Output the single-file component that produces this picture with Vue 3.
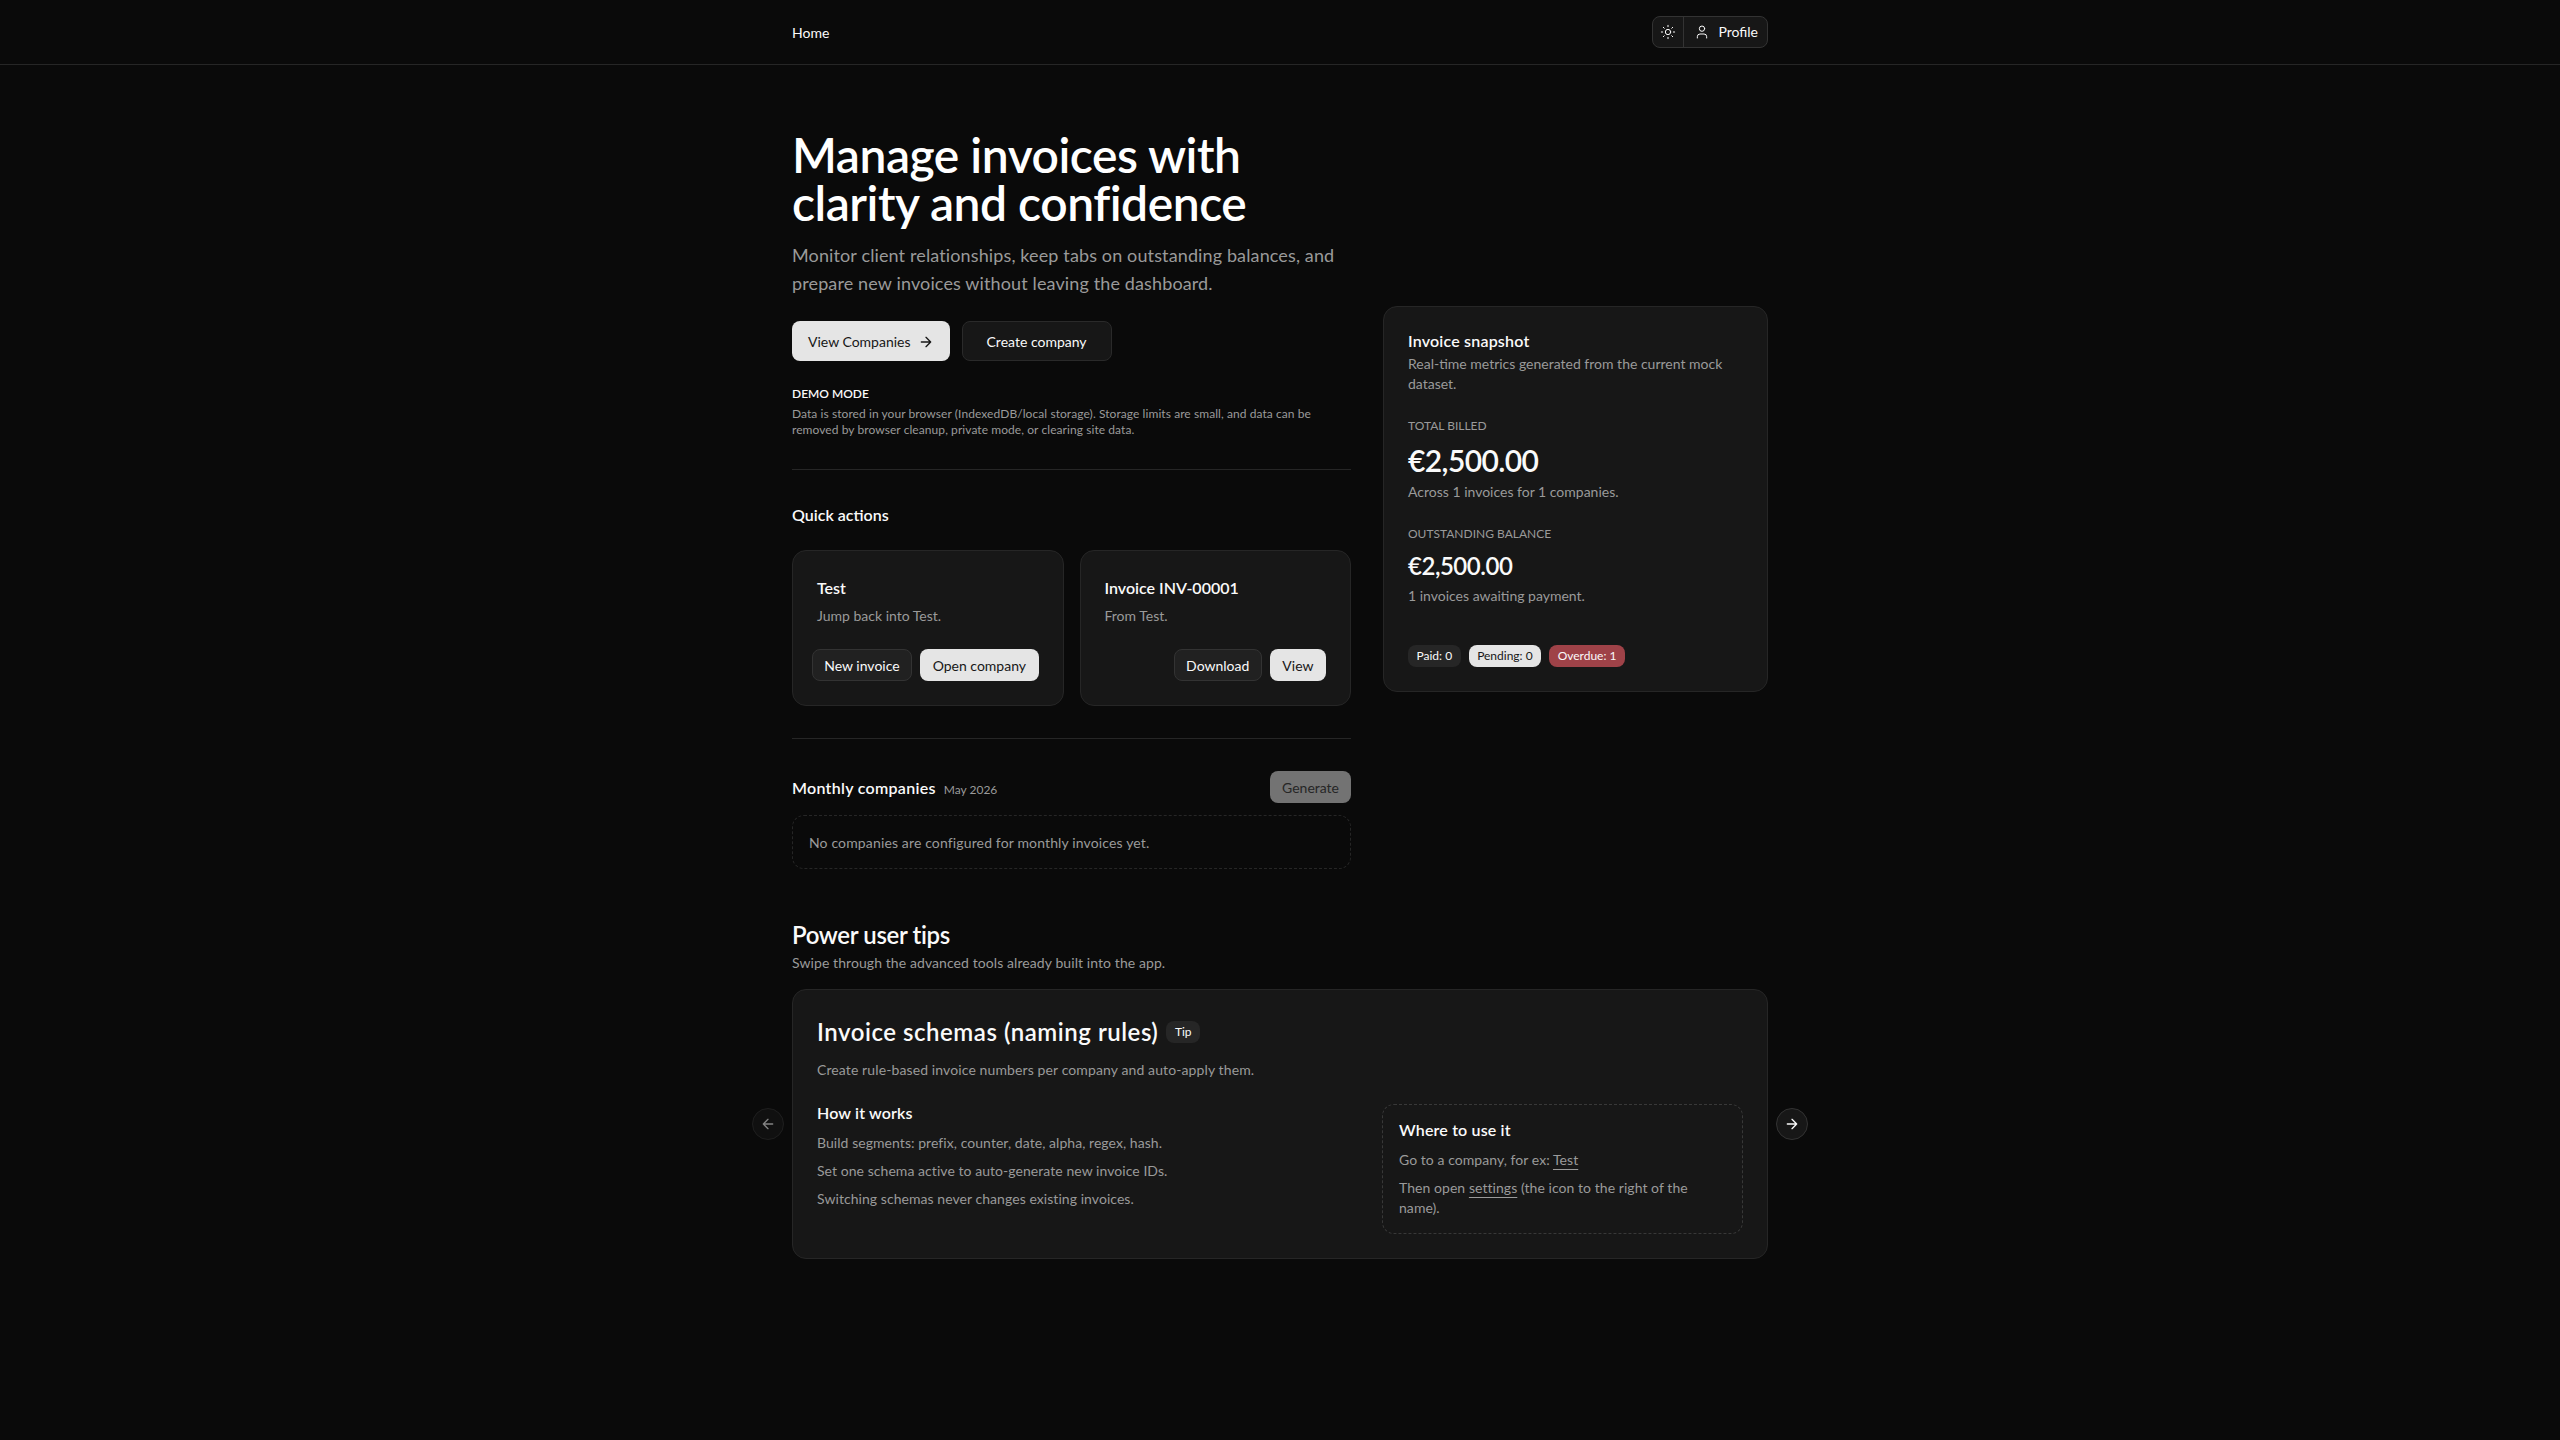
<script setup>
const tipLines = [
  'Build segments: prefix, counter, date, alpha, regex, hash.',
  'Set one schema active to auto-generate new invoice IDs.',
  'Switching schemas never changes existing invoices.'
]
</script>

<template>
  <div class="page">
    <header class="topbar">
      <div class="topbar-inner">
        <a class="home-link">Home</a>
        <div class="user-group">
          <button class="group-btn theme-btn">
            <svg class="icon" viewBox="0 0 24 24">
              <circle cx="12" cy="12" r="4" />
              <path d="M12 2v2M12 20v2M4.93 4.93l1.41 1.41M17.66 17.66l1.41 1.41M2 12h2M20 12h2M6.34 17.66l-1.41 1.41M19.07 4.93l-1.41 1.41" />
            </svg>
          </button>
          <button class="group-btn profile-btn">
            <svg class="icon" viewBox="0 0 24 24">
              <path d="M19 21v-2a4 4 0 0 0-4-4H9a4 4 0 0 0-4 4v2" />
              <circle cx="12" cy="7" r="4" />
            </svg>
            Profile
          </button>
        </div>
      </div>
    </header>

    <main class="main">
      <section class="hero">
        <div class="hero-left">
          <h1 class="hero-title">Manage invoices with<br />clarity and confidence</h1>
          <p class="hero-sub">Monitor client relationships, keep tabs on outstanding balances, and prepare new invoices without leaving the dashboard.</p>
          <div class="hero-actions">
            <button class="btn btn-primary btn-lg view-btn">
              View Companies
              <svg class="icon" viewBox="0 0 24 24"><path d="M5 12h14M12 5l7 7-7 7" /></svg>
            </button>
            <button class="btn btn-dark btn-lg create-btn">Create company</button>
          </div>

          <div class="demo">
            <div class="demo-title">Demo mode</div>
            <p class="demo-text">Data is stored in your browser (IndexedDB/local storage). Storage limits are small, and data can be removed by browser cleanup, private mode, or clearing site data.</p>
          </div>

          <hr class="divider" />

          <h2 class="section-title">Quick actions</h2>
          <div class="quick-grid">
            <div class="card quick-card">
              <div class="quick-title">Test</div>
              <p class="quick-desc">Jump back into Test.</p>
              <div class="quick-footer">
                <button class="btn btn-outline">New invoice</button>
                <button class="btn btn-primary">Open company</button>
              </div>
            </div>
            <div class="card quick-card">
              <div class="quick-title">Invoice INV-00001</div>
              <p class="quick-desc">From Test.</p>
              <div class="quick-footer">
                <button class="btn btn-outline">Download</button>
                <button class="btn btn-primary">View</button>
              </div>
            </div>
          </div>

          <hr class="divider" />

          <div class="monthly-head">
            <div class="monthly-title">
              <h2 class="section-title flat">Monthly companies</h2>
              <span class="monthly-date">May 2026</span>
            </div>
            <button class="btn btn-disabled" disabled>Generate</button>
          </div>
          <div class="empty-box">No companies are configured for monthly invoices yet.</div>
        </div>

        <aside class="card snapshot">
          <h3 class="snapshot-title">Invoice snapshot</h3>
          <p class="snapshot-desc">Real-time metrics generated from the current mock dataset.</p>
          <div class="metric first">
            <div class="metric-label">Total billed</div>
            <div class="metric-value big">€2,500.00</div>
            <div class="metric-note">Across 1 invoices for 1 companies.</div>
          </div>
          <div class="metric">
            <div class="metric-label">Outstanding balance</div>
            <div class="metric-value">€2,500.00</div>
            <div class="metric-note">1 invoices awaiting payment.</div>
          </div>
          <div class="badges">
            <span class="badge badge-muted">Paid: 0</span>
            <span class="badge badge-light">Pending: 0</span>
            <span class="badge badge-red">Overdue: 1</span>
          </div>
        </aside>
      </section>

      <section class="tips">
        <h2 class="tips-title">Power user tips</h2>
        <p class="tips-sub">Swipe through the advanced tools already built into the app.</p>
        <div class="carousel">
          <button class="nav-btn nav-prev" disabled>
            <svg class="icon" viewBox="0 0 24 24"><path d="M19 12H5M12 19l-7-7 7-7" /></svg>
          </button>
          <div class="card tip-card">
            <div class="tip-head">
              <h3 class="tip-title">Invoice schemas (naming rules)</h3>
              <span class="badge badge-muted">Tip</span>
            </div>
            <p class="tip-desc">Create rule-based invoice numbers per company and auto-apply them.</p>
            <div class="tip-grid">
              <div>
                <h4 class="tip-sub">How it works</h4>
                <p v-for="line in tipLines" :key="line" class="tip-line">{{ line }}</p>
              </div>
              <div class="where-box">
                <h4 class="tip-sub">Where to use it</h4>
                <p class="where-line">Go to a company, for ex: <a class="tip-link">Test</a></p>
                <p class="where-line">Then open <a class="tip-link">settings</a> (the icon to the right of the name).</p>
              </div>
            </div>
          </div>
          <button class="nav-btn nav-next">
            <svg class="icon" viewBox="0 0 24 24"><path d="M5 12h14M12 5l7 7-7 7" /></svg>
          </button>
        </div>
      </section>
    </main>
  </div>
</template>

<style>
html,
body {
  background: #0a0a0a;
}
</style>

<style scoped>
.page {
  min-height: 1440px;
  background: #0a0a0a;
  color: #fafafa;
  font-family: 'Lato', 'Open Sans', sans-serif;
  font-size: 14px;
  line-height: 20px;
}

p,
h1,
h2,
h3,
h4 {
  margin: 0;
}

.icon {
  width: 16px;
  height: 16px;
  flex-shrink: 0;
  fill: none;
  stroke: currentColor;
  stroke-width: 2;
  stroke-linecap: round;
  stroke-linejoin: round;
}

/* шапка */
.topbar {
  height: 65px;
  box-sizing: border-box;
  border-bottom: 1px solid #262626;
}

.topbar-inner {
  width: 976px;
  height: 64px;
  margin: 0 auto;
  display: flex;
  align-items: center;
  justify-content: space-between;
}

.home-link {
  padding-top: 1px;
}

.user-group {
  display: flex;
  height: 32px;
  box-sizing: border-box;
  border: 1px solid #333333;
  border-radius: 8px;
  background: #171717;
  overflow: hidden;
}

.group-btn {
  display: flex;
  align-items: center;
  gap: 8px;
  border: none;
  background: none;
  color: #fafafa;
  font: inherit;
  padding: 0;
}

.theme-btn {
  width: 31px;
  justify-content: center;
  border-right: 1px solid #333333;
}

.group-btn .icon {
  stroke-width: 1.5;
}

.profile-btn {
  padding: 0 9px 0 10px;
}

/* основная часть */
.main {
  width: 976px;
  margin: 0 auto;
  padding-top: 64px;
}

.hero {
  display: grid;
  grid-template-columns: 559px 385px;
  gap: 32px;
  align-items: center;
}

.hero-title {
  margin-top: 2px;
  font-size: 48px;
  line-height: 48px;
  font-weight: 600;
  letter-spacing: -0.01em;
  color: #ffffff;
}

.hero-sub {
  margin-top: 14px;
  font-size: 18px;
  line-height: 28px;
  letter-spacing: 0.007em;
  color: #9a9a9a;
}

.hero-actions {
  display: flex;
  gap: 12px;
  margin-top: 24px;
}

.btn {
  display: inline-flex;
  align-items: center;
  justify-content: center;
  gap: 8px;
  height: 32px;
  box-sizing: border-box;
  padding: 1px 11.5px 0;
  border: 1px solid transparent;
  border-radius: 8px;
  font: inherit;
  white-space: nowrap;
}

.btn-lg {
  height: 40px;
}

.view-btn {
  padding: 1px 15px 0;
  gap: 7px;
}

.create-btn {
  padding: 1px 24px 0;
}

.btn-primary {
  background: #e5e5e5;
  color: #171717;
}

.btn-dark {
  background: #171717;
  border-color: #2a2a2a;
  color: #fafafa;
}

.btn-outline {
  background: #212121;
  border-color: #333333;
  color: #fafafa;
}

.btn-disabled {
  background: #737373;
  color: #262626;
  padding: 1px 11px 0;
}

.demo {
  margin: 25px 0 -1px;
}

.demo-title {
  font-size: 12px;
  line-height: 16px;
  font-weight: 600;
  text-transform: uppercase;
}

.demo-text {
  margin-top: 4px;
  font-size: 12px;
  line-height: 16px;
  letter-spacing: 0.006em;
  color: #9a9a9a;
}

.divider {
  margin: 32px 0;
  border: none;
  border-top: 1px solid #262626;
}

.section-title {
  padding-top: 1px;
  font-size: 16px;
  line-height: 24px;
  font-weight: 600;
  margin-bottom: 23px;
}

.section-title.flat {
  margin-bottom: 0;
  letter-spacing: 0.018em;
}

.quick-grid {
  display: grid;
  grid-template-columns: 1fr 1fr;
  gap: 16px;
}

.card {
  background: #171717;
  border: 1px solid #262626;
  border-radius: 14px;
  box-sizing: border-box;
}

.quick-card {
  padding: 25px 24px 24px;
  min-width: 0;
}

.quick-title {
  font-size: 16px;
  line-height: 24px;
  font-weight: 600;
}

.quick-desc {
  margin-top: 6px;
  color: #9a9a9a;
}

.quick-footer {
  display: flex;
  justify-content: flex-end;
  gap: 8px;
  margin-top: 23px;
}

.monthly-head {
  display: flex;
  align-items: center;
  justify-content: space-between;
}

.monthly-title {
  display: flex;
  align-items: baseline;
  gap: 8px;
}

.monthly-date {
  font-size: 12px;
  line-height: 16px;
  color: #9a9a9a;
}

.empty-box {
  margin-top: 12px;
  padding: 17px 16px 15px;
  border: 1px dashed #262626;
  border-radius: 12px;
  letter-spacing: 0.01em;
  color: #9a9a9a;
}

/* карточка справа */
.snapshot {
  padding: 24px;
}

.snapshot-title {
  font-size: 16px;
  line-height: 20px;
  font-weight: 600;
  letter-spacing: 0.012em;
}

.snapshot-desc {
  margin-top: 3px;
  color: #9a9a9a;
}

.metric {
  margin-top: 24px;
}

.metric-label {
  font-size: 12px;
  line-height: 16px;
  text-transform: uppercase;
  color: #9a9a9a;
}

.metric-value {
  margin-top: 8px;
  font-size: 24px;
  line-height: 32px;
  font-weight: 600;
  letter-spacing: -0.02em;
}

.metric-value.big {
  font-size: 30px;
  line-height: 36px;
}

.metric-note {
  margin-top: 4px;
  color: #9a9a9a;
}

.badges {
  display: flex;
  gap: 8px;
  margin-top: 39px;
}

.badge {
  display: inline-flex;
  align-items: center;
  height: 22px;
  box-sizing: border-box;
  padding: 0 8.5px;
  border-radius: 8px;
  font-size: 12px;
  line-height: 16px;
}

.badge-muted {
  background: #262626;
  color: #fafafa;
}

.badge-light {
  background: #e5e5e5;
  color: #171717;
}

.badge-red {
  background: #9f4248;
  color: #fafafa;
}

/* подсказки */
.tips {
  margin-top: 50px;
}

.tips-title {
  font-size: 24px;
  line-height: 32px;
  font-weight: 600;
  letter-spacing: -0.015em;
}

.tips-sub {
  margin-top: 2px;
  letter-spacing: 0.006em;
  color: #9a9a9a;
}

.carousel {
  position: relative;
  margin-top: 16px;
}

.tip-card {
  padding: 24px;
}

.tip-head {
  display: flex;
  align-items: center;
  gap: 8px;
  margin-top: 2px;
}

.tip-title {
  font-size: 24px;
  line-height: 32px;
  font-weight: 600;
  letter-spacing: 0.022em;
}

.tip-desc {
  margin-top: 12px;
  letter-spacing: 0.008em;
  color: #9a9a9a;
}

.tip-grid {
  display: grid;
  grid-template-columns: 541px 361px;
  gap: 24px;
  margin-top: 24px;
}

.tip-sub {
  margin-top: -1px;
  font-size: 16px;
  line-height: 20px;
  font-weight: 600;
  letter-spacing: 0.01em;
}

.tip-line {
  margin-top: 8px;
  letter-spacing: 0.004em;
  color: #9a9a9a;
}

.tip-sub + .tip-line {
  margin-top: 10px;
}

.where-box {
  padding: 16px 16px 15px;
  border: 1px dashed #383838;
  border-radius: 12px;
}

.where-line {
  margin-top: 8px;
  letter-spacing: 0.004em;
  color: #9a9a9a;
}

.tip-sub + .where-line {
  margin-top: 10px;
}

.tip-link {
  text-decoration: underline;
  text-underline-offset: 4px;
}

.nav-btn {
  position: absolute;
  top: 50%;
  width: 32px;
  height: 32px;
  margin-top: -16px;
  display: flex;
  align-items: center;
  justify-content: center;
  padding: 0;
  border: 1px solid #333333;
  border-radius: 50%;
  background: #171717;
  color: #fafafa;
}

.nav-prev {
  left: -40px;
  opacity: 0.5;
}

.nav-next {
  right: -40px;
}
</style>
